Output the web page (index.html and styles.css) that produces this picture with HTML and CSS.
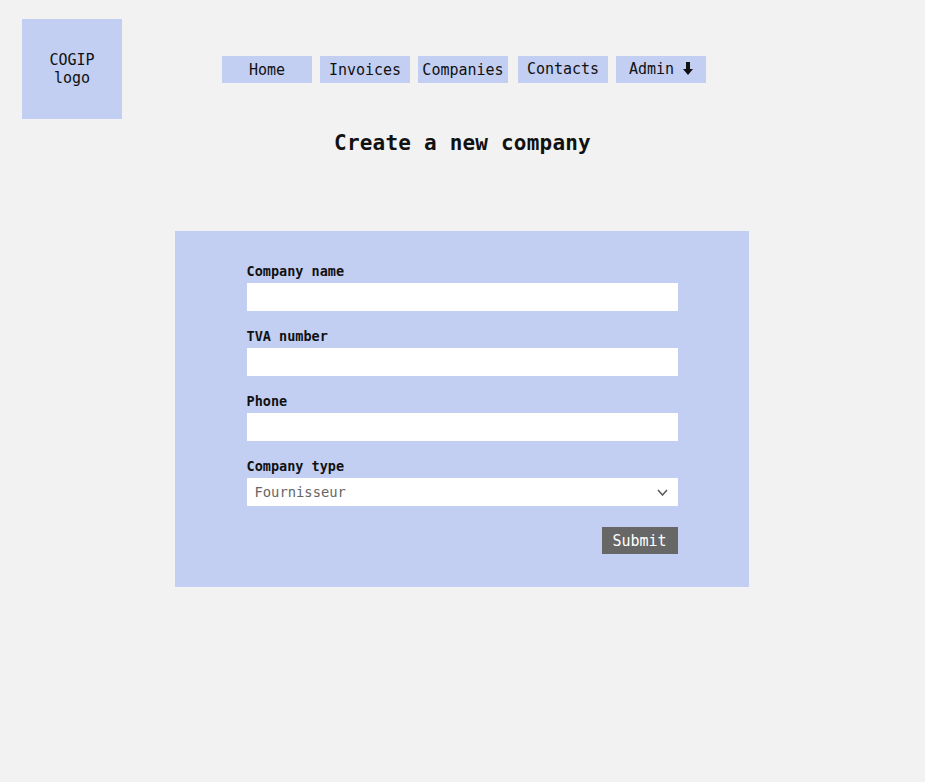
FILE: index.html
```html
<!DOCTYPE html>
<html lang="en">
<head>
<meta charset="utf-8">
<title>COGIP - Create a new company</title>
<link rel="stylesheet" href="styles.css">
</head>
<body>
<header class="header">
  <div class="logo">COGIP<br>logo</div>
  <nav class="nav">
    <a class="nav-item" href="#">Home</a>
    <a class="nav-item nav-gap" href="#">Invoices</a>
    <a class="nav-item nav-gap" href="#">Companies</a>
    <a class="nav-item nav-gap-wide nav-up" href="#">Contacts</a>
    <a class="nav-item nav-gap nav-up" href="#">Admin <svg class="admin-arrow" width="10" height="13" viewBox="0 0 10 13"><path d="M3 0h4v7h3l-5 6-5-6h3z" fill="#111"/></svg></a>
  </nav>
</header>
<h1 class="title">Create a new company</h1>
<form class="form">
  <div class="group">
    <label class="label" for="name">Company name</label>
    <input class="input" id="name" type="text">
  </div>
  <div class="group">
    <label class="label" for="tva">TVA number</label>
    <input class="input" id="tva" type="text">
  </div>
  <div class="group">
    <label class="label" for="phone">Phone</label>
    <input class="input" id="phone" type="text">
  </div>
  <div class="group">
    <label class="label" for="type">Company type</label>
    <div class="select-wrap">
      <select class="select" id="type">
        <option>Fournisseur</option>
        <option>Client</option>
      </select>
      <svg class="chevron" width="11" height="7" viewBox="0 0 11 7"><path d="M1 1l4.5 5 4.5-5" fill="none" stroke="#555" stroke-width="1.5"/></svg>
    </div>
  </div>
  <div class="actions">
    <button class="submit" type="submit">Submit</button>
  </div>
</form>
</body>
</html>
```

FILE: styles.css
```css
* { box-sizing: border-box; }

body {
  margin: 0;
  background: #f2f2f2;
  font-family: "DejaVu Sans Mono", "Liberation Mono", monospace;
  color: #111;
  min-height: 782px;
}

.header {
  display: flex;
  align-items: flex-start;
  padding: 19px 22px 0;
}

.logo {
  width: 100px;
  height: 100px;
  background: #c2cef2;
  display: flex;
  align-items: center;
  justify-content: center;
  text-align: center;
  font-size: 15px;
  line-height: 18px;
}

.nav {
  display: flex;
  margin-left: 100px;
  margin-top: 37px;
}

.nav-item {
  width: 90px;
  height: 27px;
  background: #c2cef2;
  color: #111;
  text-decoration: none;
  font-size: 15px;
  display: flex;
  align-items: center;
  justify-content: center;
  padding-top: 1px;
  white-space: nowrap;
}

.nav-up { padding-top: 0; padding-bottom: 2px; }

.nav-gap { margin-left: 8px; }
.nav-gap-wide { margin-left: 10px; }

.admin-arrow { margin-left: 9px; }

.title {
  margin: 10px 0 0;
  text-align: center;
  font-size: 21px;
  line-height: 28px;
  font-weight: bold;
  letter-spacing: 0.2px;
}

.form {
  width: 574px;
  margin: 74px 0 0 calc(50% - 288px);
  background: #c2cef2;
  padding: 31px 71px 33px 72px;
}

.group {
  margin-bottom: 16px;
}

.label {
  display: block;
  font-size: 13.5px;
  font-weight: bold;
  line-height: 18px;
  margin-bottom: 3px;
}

.input,
.select {
  display: block;
  width: 100%;
  height: 28px;
  border: none;
  background: #fff;
  margin: 0;
  outline: none;
}

.select-wrap { position: relative; }

.select {
  appearance: none;
  -webkit-appearance: none;
  font-family: "DejaVu Sans Mono", "Liberation Mono", monospace;
  font-size: 13.8px;
  color: #666;
  padding: 0 8px;
  border-radius: 0;
}

.chevron {
  position: absolute;
  right: 10px;
  top: 11px;
  pointer-events: none;
}

.actions {
  display: flex;
  justify-content: flex-end;
  padding-top: 5px;
}

.submit {
  width: 76px;
  height: 27px;
  border: none;
  background: #676767;
  color: #fff;
  font-family: "DejaVu Sans Mono", "Liberation Mono", monospace;
  font-size: 15px;
  padding: 0;
}
```
